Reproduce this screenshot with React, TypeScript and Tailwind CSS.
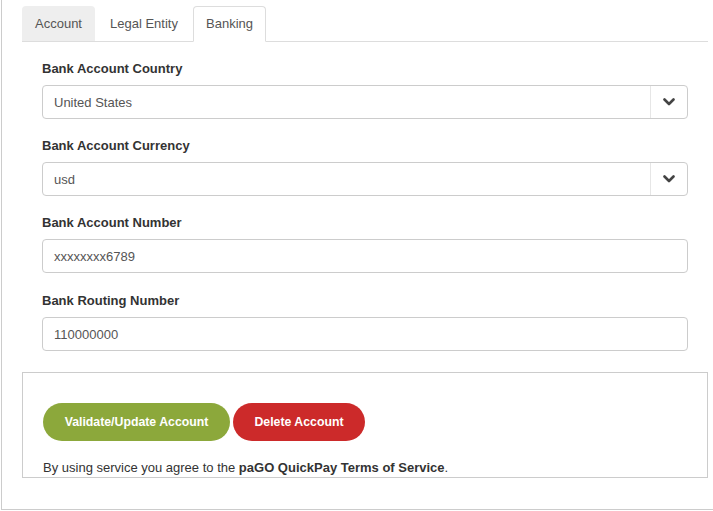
import React from "react";

const font = { fontFamily: '"Liberation Sans", Arial, Helvetica, sans-serif' };

function Chevron() {
  return (
    <svg width="12" height="8" viewBox="0 0 12 8" className="block">
      <polyline points="1.5,1.5 6,6 10.5,1.5" fill="none" stroke="#444" strokeWidth="2.6" strokeLinecap="round" strokeLinejoin="round" />
    </svg>
  );
}

function Field({ label, value, select, extra }: { label: string; value: string; select?: boolean; extra?: boolean }) {
  return (
    <div className={extra ? "flex flex-col mt-[1px]" : "flex flex-col"}>
      <div className="h-[18px] leading-[18px] text-[13px] font-bold text-[#333] mb-[7px]">{label}</div>
      <div className="h-[34px] flex items-stretch border border-[#ccc] rounded-[4px] bg-white">
        <div className="flex-1 flex items-center pl-[11px] pt-[1px] text-[13px] text-[#555]">{value}</div>
        {select && (
          <div className="w-[37px] border-l border-[#e6e6e6] flex items-center justify-center">
            <Chevron />
          </div>
        )}
      </div>
    </div>
  );
}

export default function App() {
  return (
    <div className="w-[713px] h-[511px] bg-white overflow-hidden" style={font}>
      <div className="ml-[1px] w-[712px] h-[510px] border-l border-b border-[#ccc] pl-[20px] pr-[5px] pt-[6px]">
        <div className="flex border-b border-[#ddd] h-[36px]">
          <div className="w-[73px] h-[35px] bg-[#eee] rounded-t-[4px] flex items-center justify-center text-[13px] text-[#555]">Account</div>
          <div className="w-[98px] h-[35px] flex items-center justify-center text-[13px] text-[#555]">Legal Entity</div>
          <div className="w-[73px] h-[36px] bg-white border border-[#ddd] border-b-white rounded-t-[4px] flex items-center justify-center text-[13px] text-[#555]">Banking</div>
        </div>
        <div className="px-[20px] pt-[18px] flex flex-col gap-[18px]">
          <Field label="Bank Account Country" value="United States" select />
          <Field label="Bank Account Currency" value="usd" select />
          <Field label="Bank Account Number" value="xxxxxxxx6789" />
          <Field label="Bank Routing Number" value="110000000" extra />
        </div>
        <div className="mt-[21px] h-[106px] border border-[#ccc] pt-[30px] px-[20px]">
          <div className="flex gap-[3px]">
            <div className="w-[187px] h-[38px] rounded-full bg-[#8ca83b] text-white font-bold text-[12.3px] flex items-center justify-center">Validate/Update Account</div>
            <div className="w-[132px] h-[38px] rounded-full bg-[#cc2a2a] text-white font-bold text-[12.3px] flex items-center justify-center">Delete Account</div>
          </div>
          <div className="mt-[19px] text-[13px] text-[#333] leading-[16px]">
            By using service you agree to the <span className="font-bold">paGO QuickPay Terms of Service</span>.
          </div>
        </div>
      </div>
    </div>
  );
}
